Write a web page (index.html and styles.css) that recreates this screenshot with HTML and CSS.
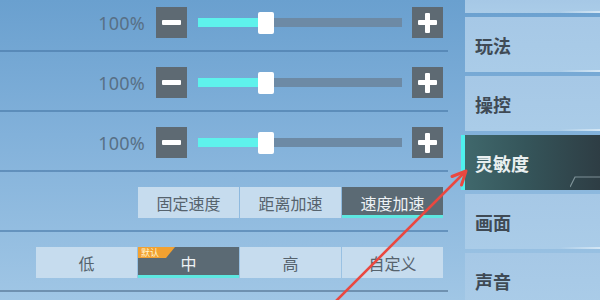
FILE: index.html
```html
<!DOCTYPE html>
<html lang="zh">
<head>
<meta charset="utf-8">
<title>灵敏度设置</title>
<link rel="stylesheet" href="styles.css">
</head>
<body>
<div class="screen">
  <main class="main">
    <div class="row">
      <span class="pct">100%</span>
      <div class="step"><span class="bar"></span></div>
      <div class="track"><div class="fill" style="width:60px"></div><div class="thumb"></div></div>
      <div class="step plus"><span class="bar"></span><span class="bar v"></span></div>
    </div>
    <div class="row">
      <span class="pct">100%</span>
      <div class="step"><span class="bar"></span></div>
      <div class="track"><div class="fill" style="width:60px"></div><div class="thumb"></div></div>
      <div class="step plus"><span class="bar"></span><span class="bar v"></span></div>
    </div>
    <div class="row">
      <span class="pct">100%</span>
      <div class="step"><span class="bar"></span></div>
      <div class="track"><div class="fill" style="width:60px"></div><div class="thumb"></div></div>
      <div class="step plus"><span class="bar"></span><span class="bar v"></span></div>
    </div>
    <div class="row">
      <div class="seg">
        <div class="opt">固定速度</div>
        <div class="opt">距离加速</div>
        <div class="opt on">速度加速</div>
      </div>
    </div>
    <div class="row last">
      <div class="seg">
        <div class="opt">低</div>
        <div class="opt on"><span class="badge">默认</span>中</div>
        <div class="opt">高</div>
        <div class="opt">自定义</div>
      </div>
    </div>
  </main>
  <nav class="side">
    <div class="tab cut"></div>
    <div class="tab">玩法</div>
    <div class="tab">操控</div>
    <div class="tab active">灵敏度
      <svg class="notch" width="30" height="14" viewBox="0 0 30 14"><polyline points="0,12 5,2 30,2" fill="none" stroke="rgba(190,210,215,0.55)" stroke-width="1.2"/></svg>
    </div>
    <div class="tab">画面</div>
    <div class="tab">声音</div>
  </nav>
  <svg class="arrow" width="600" height="300" viewBox="0 0 600 300">
    <line x1="336" y1="301" x2="465" y2="172" stroke="#ea4840" stroke-width="2.6" stroke-linecap="round"/>
    <polyline points="452,176.5 466,171 461.5,185" fill="none" stroke="#ea4840" stroke-width="3" stroke-linecap="round" stroke-linejoin="round"/>
  </svg>
</div>
</body>
</html>
```

FILE: styles.css
```css
html, body {
  margin: 0;
  padding: 0;
}
body {
  width: 600px;
  height: 300px;
  overflow: hidden;
  font-family: "Noto Sans CJK SC", "Noto Sans", sans-serif;
}
.screen {
  position: relative;
  width: 600px;
  height: 300px;
  display: flex;
  overflow: hidden;
  background: linear-gradient(180deg, #6aa0cf 0%, #82b1da 45%, #a0c6e5 100%);
}
.main {
  width: 465px;
  flex: none;
  display: flex;
  flex-direction: column;
  margin-top: -8px;
}
.row {
  width: 448px;
  height: 60px;
  padding-top: 3px;
  padding-right: 5px;
  box-sizing: border-box;
  border-bottom: 2px solid rgba(70, 118, 166, 0.6);
  display: flex;
  align-items: center;
  justify-content: flex-end;
}
.row.last {
  border-bottom: 2px solid #6f91b0;
}
.pct {
  font-family: "Noto Sans", "Liberation Sans", sans-serif;
  font-size: 18px;
  color: #587086;
  margin-right: 11px;
  letter-spacing: 0.2px;
}
.step {
  width: 31px;
  height: 31px;
  background: #5e6a73;
  position: relative;
  display: flex;
  align-items: center;
  justify-content: center;
}
.step .bar {
  position: absolute;
  width: 19px;
  height: 5px;
  background: #ffffff;
  border-radius: 1px;
}
.step .bar.v {
  width: 5px;
  height: 20px;
}
.track {
  width: 204px;
  height: 22px;
  margin: 0 10px 0 11px;
  display: flex;
  align-items: center;
  background: linear-gradient(#6d8aa5, #6d8aa5) center / 100% 9px no-repeat;
}
.fill {
  height: 9px;
  background: #5ef2ec;
}
.thumb {
  width: 16px;
  height: 22px;
  background: #ffffff;
  border-radius: 2px;
}
.seg {
  display: flex;
  gap: 1px;
}
.opt {
  position: relative;
  width: 101px;
  height: 31px;
  background: #c6dcee;
  color: #56636d;
  font-size: 16px;
  display: flex;
  align-items: center;
  justify-content: center;
}
.opt.on {
  background: #5b6a74;
  color: #eef2f5;
  box-shadow: inset 0 -3px 0 #5ee7e1;
}
.badge {
  position: absolute;
  left: 0;
  top: 0;
  width: 37px;
  height: 11px;
  padding-left: 3px;
  box-sizing: border-box;
  background: #f2a131;
  color: #fff5cf;
  font-size: 9px;
  line-height: 11px;
  clip-path: polygon(0 0, 100% 0, calc(100% - 9px) 100%, 0 100%);
}
.side {
  width: 135px;
  flex: none;
  display: flex;
  flex-direction: column;
  gap: 4px;
}
.tab {
  position: relative;
  height: 55px;
  flex: none;
  background: linear-gradient(180deg, #a6c8e6, #aacce8);
  color: #3f4a55;
  font-size: 18px;
  font-weight: 700;
  padding-left: 10px;
  display: flex;
  align-items: center;
}
.tab::after {
  content: "";
  position: absolute;
  right: 0;
  bottom: 0;
  width: 40px;
  height: 2px;
  background: linear-gradient(90deg, rgba(255,255,255,0), rgba(230,242,250,0.7));
}
.tab.cut {
  height: 13px;
}
.tab.active {
  margin-left: -4px;
  border-left: 4px solid #4ff0ee;
  background: linear-gradient(90deg, #40686c 0%, #35555a 45%, #2e3d44 100%);
  color: #e9eff0;
}
.tab.active::after {
  display: none;
}
.notch {
  position: absolute;
  right: 0;
  bottom: 1px;
}
.arrow {
  position: absolute;
  left: 0;
  top: 0;
  pointer-events: none;
}
```
